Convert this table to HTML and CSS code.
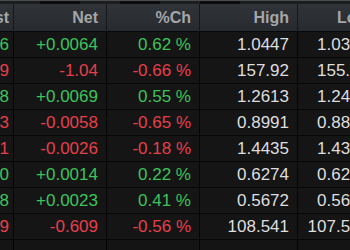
FILE: index.html
```html
<!DOCTYPE html>
<html>
<head>
<meta charset="utf-8">
<link rel="stylesheet" href="styles.css">
</head>
<body>
<div class="tabs">
  <span class="tab"></span><span class="tab dark"></span><span class="tab"></span><span class="tab dark"></span><span class="tab"></span><span class="tab dark"></span><span class="tab"></span>
</div>
<div class="grid">
  <div class="hd"><span>Last</span></div><div class="hd"><span>Net</span></div><div class="hd"><span>%Ch</span></div><div class="hd"><span>High</span></div><div class="hd"><span>Low</span></div>

  <div class="c up"><span>1.0436</span></div><div class="c up"><span>+0.0064</span></div><div class="c up"><span>0.62 %</span></div><div class="c w"><span>1.0447</span></div><div class="c w"><span>1.0372</span></div>
  <div class="c dn"><span>156.09</span></div><div class="c dn"><span>-1.04</span></div><div class="c dn"><span>-0.66 %</span></div><div class="c w"><span>157.92</span></div><div class="c w"><span>155.81</span></div>
  <div class="c up"><span>1.2588</span></div><div class="c up"><span>+0.0069</span></div><div class="c up"><span>0.55 %</span></div><div class="c w"><span>1.2613</span></div><div class="c w"><span>1.2487</span></div>
  <div class="c dn"><span>0.8903</span></div><div class="c dn"><span>-0.0058</span></div><div class="c dn"><span>-0.65 %</span></div><div class="c w"><span>0.8991</span></div><div class="c w"><span>0.8896</span></div>
  <div class="c dn"><span>1.4331</span></div><div class="c dn"><span>-0.0026</span></div><div class="c dn"><span>-0.18 %</span></div><div class="c w"><span>1.4435</span></div><div class="c w"><span>1.4312</span></div>
  <div class="c up"><span>0.6270</span></div><div class="c up"><span>+0.0014</span></div><div class="c up"><span>0.22 %</span></div><div class="c w"><span>0.6274</span></div><div class="c w"><span>0.6241</span></div>
  <div class="c up"><span>0.5668</span></div><div class="c up"><span>+0.0023</span></div><div class="c up"><span>0.41 %</span></div><div class="c w"><span>0.5672</span></div><div class="c w"><span>0.5640</span></div>
  <div class="c dn"><span>107.769</span></div><div class="c dn"><span>-0.609</span></div><div class="c dn"><span>-0.56 %</span></div><div class="c w"><span>108.541</span></div><div class="c w"><span>107.512</span></div>

  <div class="e"></div><div class="e"></div><div class="e"></div><div class="e"></div><div class="e"></div>
</div>
</body>
</html>
```
FILE: styles.css
```css
html, body {
  margin: 0;
  padding: 0;
  background: #121212;
  width: 350px;
  height: 250px;
  overflow: hidden;
  font-family: "Liberation Sans", Arial, sans-serif;
}
.tabs {
  display: flex;
  height: 4px;
  background: #1c1d1f;
  border-top: 1px solid #4a4c50;
  box-sizing: border-box;
}
.tab {
  width: 40px;
  flex: none;
}
.tab.dark {
  background: #0c0c0d;
}
.grid {
  display: grid;
  grid-template-columns: 14px 93px 93px 98px 80px;
  width: 378px;
}
.hd, .c, .e {
  display: flex;
  justify-content: flex-end;
  align-items: center;
  overflow: hidden;
  white-space: nowrap;
  border-right: 1px solid #050505;
  padding-right: 8px;
  box-sizing: border-box;
}
.hd {
  height: 28px;
  background: linear-gradient(#303337, #272a2e);
  border-right-color: #17181a;
  border-bottom: 1px solid #08090a;
  color: #a4a6a9;
  font-weight: bold;
  font-size: 16px;
}
.c {
  height: 26px;
  background: #151515;
  border-bottom: 1px solid #060606;
  font-size: 17px;
}
.grid > .hd:first-child, .grid > .c:nth-child(5n+1) {
  padding-right: 4px;
}
.e {
  height: 12px;
  background: #141414;
}
.up { color: #3ec35c; }
.dn { color: #e5404c; }
.w { color: #dedede; }
```
